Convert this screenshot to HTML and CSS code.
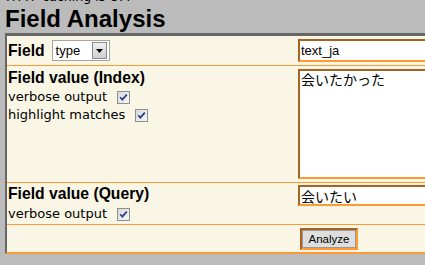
FILE: index.html
```html
<!DOCTYPE html>
<html lang="en">
<head>
<meta charset="utf-8">
<title>Field Analysis</title>
<link rel="stylesheet" href="styles.css">
</head>
<body>
<div class="status">HTTP caching is OFF</div>
<h1 class="title">Field Analysis</h1>
<form class="box">
  <div class="row r1">
    <div class="lcell field-cell">
      <strong class="lbl">Field</strong>
      <span class="select"><span class="sel-text">type</span><span class="sel-btn"><svg width="7" height="4" viewBox="0 0 7 4"><path d="M0 0H7L3.5 4Z" fill="#000"/></svg></span></span>
    </div>
    <div class="rcell"><input class="inp inp-name" type="text" value="text_ja" readonly></div>
  </div>
  <div class="row r2">
    <div class="lcell">
      <div class="heading">Field value (Index)</div>
      <div class="opt"><span class="opt-text">verbose output</span><span class="cb"><svg width="11" height="11" viewBox="0 0 11 11"><path d="M2.2 5.2L4.3 7.6L8.8 2.6" fill="none" stroke="#2b3d8c" stroke-width="1.7"/></svg></span></div>
      <div class="opt"><span class="opt-text">highlight matches</span><span class="cb"><svg width="11" height="11" viewBox="0 0 11 11"><path d="M2.2 5.2L4.3 7.6L8.8 2.6" fill="none" stroke="#2b3d8c" stroke-width="1.7"/></svg></span></div>
    </div>
    <div class="rcell"><textarea class="inp area" readonly>会いたかった</textarea></div>
  </div>
  <div class="row r3">
    <div class="lcell">
      <div class="heading">Field value (Query)</div>
      <div class="opt opt-q"><span class="opt-text">verbose output</span><span class="cb"><svg width="11" height="11" viewBox="0 0 11 11"><path d="M2.2 5.2L4.3 7.6L8.8 2.6" fill="none" stroke="#2b3d8c" stroke-width="1.7"/></svg></span></div>
    </div>
    <div class="rcell"><input class="inp inp-query" type="text" value="会いたい" readonly></div>
  </div>
  <div class="row r4">
    <div class="lcell"></div>
    <div class="rcell"><button class="btn" type="button">Analyze</button></div>
  </div>
</form>
</body>
</html>
```
FILE: styles.css
```css
html {
  overflow: hidden;
  background: #bbbbbb;
}
body {
  margin: 0;
  padding: 0 0 0 5px;
  background: #bbbbbb;
  color: #000;
  font-family: "DejaVu Sans", sans-serif;
}
.status {
  font-size: 12.6px;
  line-height: 15px;
  margin-top: -11px;
  padding-left: 1px;
  white-space: nowrap;
}
.title {
  font: bold 24px/28px "Liberation Sans", Arial, sans-serif;
  margin: 1px 0 0 0;
  white-space: nowrap;
}
.box {
  display: block;
  width: 560px;
  margin: 0;
  background: #faf6e6;
  border-top: 3px solid #666666;
  border-left: 2px solid #666666;
  border-bottom: 2px solid #ff9933;
}
.row {
  display: grid;
  grid-template-columns: 291px 1fr;
  box-sizing: border-box;
  border-bottom: 1px solid #ff9933;
}
.row.r4 { border-bottom: 0; }
.r1 { height: 30px; }
.r2 { height: 117px; }
.r3 { height: 42px; }
.r4 { height: 27px; }

.lcell {
  padding-left: 1px;
}
.field-cell {
  display: flex;
  align-items: center;
}
.lbl, .heading {
  font: bold 15.7px/20px "Liberation Sans", Arial, sans-serif;
  white-space: nowrap;
}
.r2 .lcell { padding-top: 2px; }
.r3 .lcell { padding-top: 1px; }
.select {
  display: flex;
  align-items: center;
  box-sizing: border-box;
  width: 58px;
  height: 21px;
  margin-left: 7px;
  border: 1px solid #a5a5a5;
  background: #fff;
}
.sel-text {
  font: 13px/15px "Liberation Sans", Arial, sans-serif;
  padding-left: 3px;
}
.sel-btn {
  display: flex;
  align-items: center;
  justify-content: center;
  box-sizing: border-box;
  width: 15px;
  height: 17px;
  margin-left: auto;
  margin-right: 2px;
  border: 1px solid #8c8c8c;
  background: linear-gradient(#f0f0f0, #cfcfcf);
}
.opt {
  display: flex;
  align-items: flex-start;
  height: 18px;
  white-space: nowrap;
}
.opt-text {
  font-size: 13px;
  line-height: 13px;
  padding-top: 2px;
}
.opt-q { padding-top: 1px; }
.cb {
  display: flex;
  align-items: center;
  justify-content: center;
  box-sizing: border-box;
  width: 13px;
  height: 13px;
  margin-top: 3px;
  margin-left: 10px;
  border: 1px solid #8e8f8f;
  background: linear-gradient(135deg, #d8d8d8, #f7f7f7);
}
.rcell {
  padding-top: 3px;
}
.r3 .rcell { padding-top: 2px; }
.inp {
  display: block;
  box-sizing: border-box;
  width: 300px;
  margin: 0;
  padding: 0 1px;
  border-width: 2px;
  border-style: solid;
  border-color: #a66321 #ff9933 #ff9933 #a66321;
  background: #fff;
  color: #000;
  outline: none;
}
.inp-name {
  height: 23px;
  font: 13px "Liberation Sans", Arial, sans-serif;
}
.inp-query {
  height: 21px;
  font: 14px "Noto Sans CJK JP", sans-serif;
}
.area {
  height: 110px;
  resize: none;
  overflow: hidden;
  font: 14px/16px "Noto Sans CJK JP", sans-serif;
}
.btn {
  display: block;
  box-sizing: border-box;
  width: 58px;
  height: 22px;
  margin: 0 0 0 2px;
  padding: 0;
  border-width: 2px;
  border-style: solid;
  border-color: #a66321 #ff9933 #ff9933 #a66321;
  box-shadow: inset 0 0 0 1px #9a9a9a;
  background: #dedede;
  color: #000;
  font: 11.5px "Liberation Sans", Arial, sans-serif;
}
```
